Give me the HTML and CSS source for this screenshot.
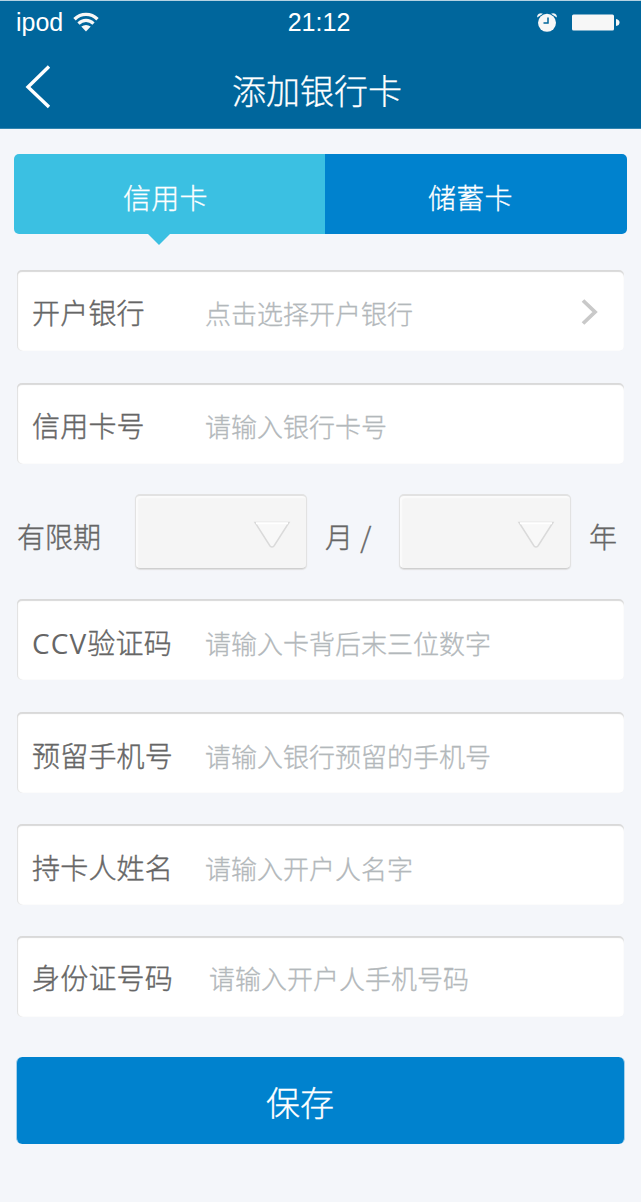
FILE: index.html
```html
<!DOCTYPE html>
<html lang="zh-CN">
<head>
<meta charset="utf-8">
<title>添加银行卡</title>
<link rel="stylesheet" href="styles.css">
</head>
<body>
<header class="header">
  <div class="status">
    <div class="status-left">
      <span>ipod</span>
      <svg class="wifi" width="26" height="20" viewBox="0 0 26 20" fill="none" stroke="#f7f7f7">
        <path d="M1.5 7.2C8 .8 18 .8 24.5 7.2" stroke-width="3.4"/>
        <path d="M5.5 11.6C9.8 7.4 16.2 7.4 20.5 11.6" stroke-width="3.2"/>
        <path d="M13 19.4L8.3 14.6Q13 11.4 17.7 14.6Z" fill="#f7f7f7" stroke="none"/>
      </svg>
    </div>
    <span class="time">21:12</span>
    <div class="status-right">
      <svg width="20" height="19" viewBox="0 0 20 19">
        <path d="M.2 4.6A3.8 3.8 0 0 1 6 .8ZM19.8 4.6A3.8 3.8 0 0 0 14 .8Z" fill="#f7f7f7"/>
        <circle cx="10" cy="9.8" r="9" fill="#f7f7f7"/>
        <path d="M11 4.5V10H6.5" fill="none" stroke="#00669c" stroke-width="1.5"/>
      </svg>
      <svg width="48" height="17" viewBox="0 0 48 17" fill="#f7f7f7">
        <rect x="0" y=".5" width="42" height="16" rx="1.5"/>
        <path d="M44 5Q47.5 5.5 47.5 8.5T44 12Z"/>
      </svg>
    </div>
  </div>
  <div class="nav">
    <svg class="back" width="26" height="44" viewBox="0 0 26 44" fill="none" stroke="#fff" stroke-width="3.4"><path d="M24 1.5L3 22L24 42"/></svg>
    <h1 class="title">添加银行卡</h1>
  </div>
</header>
<main class="page">
  <div class="tabs">
    <div class="tab tab-active">信用卡</div>
    <div class="tab tab-idle">储蓄卡</div>
  </div>
  <form class="form">
    <div class="field field-bank">
      <span class="label">开户银行</span><span class="hint">点击选择开户银行</span>
      <svg class="chevron" width="18" height="26" viewBox="0 0 18 26" fill="none" stroke="#c9c9c9" stroke-width="3.8"><path d="M2 1.5L14 13L2 24.5"/></svg>
    </div>
    <div class="field field-number"><span class="label">信用卡号</span><span class="hint">请输入银行卡号</span></div>
    <div class="expiry">
      <span class="expiry-label">有限期</span>
      <div class="select"><svg width="38" height="28" viewBox="0 0 38 28"><path d="M2 2.5H36L21 26Q19 28 17 26Z" fill="#f8f8f8" stroke="#dadada" stroke-width="1.5"/><path d="M3 3.2H35" stroke="#fff" stroke-width="2"/></svg></div>
      <span class="month">月 /</span>
      <div class="select"><svg width="38" height="28" viewBox="0 0 38 28"><path d="M2 2.5H36L21 26Q19 28 17 26Z" fill="#f8f8f8" stroke="#dadada" stroke-width="1.5"/><path d="M3 3.2H35" stroke="#fff" stroke-width="2"/></svg></div>
      <span class="year">年</span>
    </div>
    <div class="field field-ccv"><span class="label"><span class="latin">CCV</span>验证码</span><span class="hint">请输入卡背后末三位数字</span></div>
    <div class="field"><span class="label">预留手机号</span><span class="hint">请输入银行预留的手机号</span></div>
    <div class="field"><span class="label">持卡人姓名</span><span class="hint">请输入开户人名字</span></div>
    <div class="field field-last"><span class="label">身份证号码</span><span class="hint">请输入开户人手机号码</span></div>
  </form>
  <div class="save">保存</div>
</main>
</body>
</html>
```
FILE: styles.css
```css
* { box-sizing: border-box; }
body {
  margin: 0;
  height: 1202px;
  overflow: hidden;
  background: #f4f6fa;
  color: #666;
  font-family: "Noto Sans CJK SC", sans-serif;
  font-weight: 300;
  font-size: 28px;
}
svg { display: block; flex: none; }
.header {
  height: 129px;
  background: #00669c;
  border-top: 1px solid #b4d2e2;
  border-bottom: 1px solid #3385b0;
  color: #fff;
}
.status {
  display: grid;
  grid-template-columns: 1fr auto 1fr;
  align-items: center;
  height: 42px;
  padding: 0 21px 0 16px;
  font-family: "Liberation Sans", sans-serif;
  font-size: 25px;
  font-weight: 400;
}
.status-left, .status-right { display: flex; align-items: center; }
.status-left { gap: 10px; }
.status-right { justify-content: flex-end; gap: 15px; }
.time { padding-left: 2px; }
.nav {
  display: grid;
  grid-template-columns: 26px 1fr 26px;
  height: 85px;
  align-items: center;
  padding: 3px 32px 0 25px;
}
.title {
  margin: 6px 0 0;
  text-align: center;
  font-size: 34px;
  font-weight: 300;
  line-height: 44px;
  -webkit-text-stroke: .3px;
}
.page { padding: 25px 17px 0; }
.tabs {
  display: flex;
  height: 80px;
  margin: 0 -3px;
  color: #fff;
  -webkit-text-stroke: .3px;
  letter-spacing: .2px;
}
.tab { display: flex; align-items: center; padding-top: 5px; }
.tab-active {
  position: relative;
  width: 311px;
  padding-left: 109px;
  background: #3bc0e2;
  border-radius: 5px 0 0 5px;
}
.tab-active::after {
  content: "";
  position: absolute;
  left: 133px;
  top: 79px;
  border: 12px solid transparent;
  border-bottom: 0;
  border-top-color: #3bc0e2;
}
.tab-idle {
  flex: 1;
  padding-left: 103px;
  background: #0082ce;
  border-radius: 0 5px 5px 0;
}
.form {
  display: flex;
  flex-direction: column;
  gap: 31px;
  margin-top: 36px;
  -webkit-text-stroke: .4px;
}
.field {
  display: flex;
  align-items: center;
  height: 81px;
  padding: 4px 26px 0 15px;
  background: #fff;
  border-radius: 5px;
  box-shadow: inset 0 2px 1px #d9d9d9, inset 1px 0 1px #e2e2e2;
}
.field-bank { padding: 2px 25px 0 15px; margin-bottom: 1px; }
.field-number { padding-top: 2px; }
.field-ccv { padding-top: 5px; margin-bottom: 1px; }
.field-last { padding-top: 0; }
.field-last .hint { padding-left: 4px; }
.label { width: 173px; white-space: nowrap; letter-spacing: .2px; }
.latin { font-family: "Open Sans", sans-serif; font-weight: 400; letter-spacing: 1.1px; -webkit-text-stroke: 0; }
.hint { font-size: 26px; color: #b3b8bb; padding-top: 1px; -webkit-text-stroke: .3px; }
.chevron { margin-left: auto; }
.expiry { display: flex; align-items: center; height: 76px; margin: -2px 0 -1px; }
.expiry-label { width: 118px; padding-top: 10px; }
.select {
  display: flex;
  align-items: center;
  justify-content: flex-end;
  width: 172px;
  height: 75px;
  padding: 4px 15px 0 0;
  background: #f5f5f5;
  border: 1px solid #e2e2e2;
  border-top: 2px solid #e2e2e2;
  border-bottom-color: #cfcfcf;
  border-radius: 5px;
  box-shadow: inset 2px 2px 1px #fbfbfb, 0 1px 1px #dfdfdf;
}
.month { width: 92px; padding: 10px 0 0 18px; white-space: pre; word-spacing: 1px; }
.year { padding: 10px 0 0 18px; }
.save {
  height: 87px;
  margin: 40px -1px 0 -1px;
  padding: 0 41px 0 0;
  background: #0082ce;
  border: 1px solid #a5d0ea;
  border-width: 0 1px;
  border-radius: 6px;
  color: #fff;
  font-size: 34px;
  line-height: 89px;
  text-align: center;
  -webkit-text-stroke: .3px;
}
```
